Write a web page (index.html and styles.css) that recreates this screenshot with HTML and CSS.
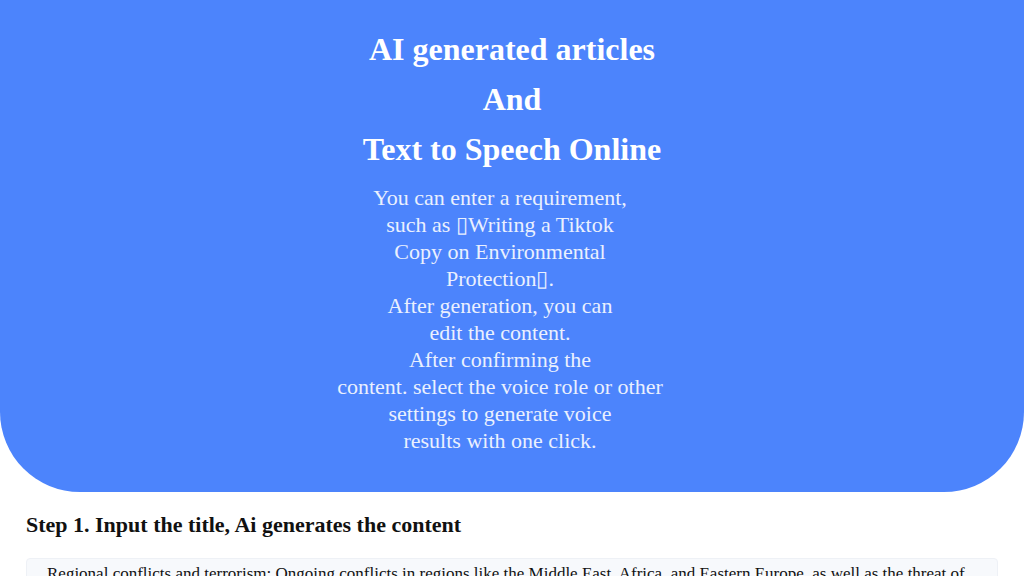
FILE: index.html
```html
<!DOCTYPE html>
<html lang="en">
<head>
<meta charset="utf-8">
<title>AI generated articles And Text to Speech Online</title>
<link rel="stylesheet" href="styles.css">
</head>
<body>
<header class="hero">
  <h1 class="hero-title">AI generated articles<br>And<br>Text to Speech Online</h1>
  <p class="hero-desc">You can enter a requirement,<br>such as ▯Writing a Tiktok<br>Copy on Environmental<br>Protection▯.<br>After generation, you can<br>edit the content.<br>After confirming the<br>content. select the voice role or other<br>settings to generate voice<br>results with one click.</p>
</header>
<main class="content">
  <h2 class="step-title">Step 1. Input the title, Ai generates the content</h2>
  <div class="text-box">
    <p>Regional conflicts and terrorism: Ongoing conflicts in regions like the Middle East, Africa, and Eastern Europe, as well as the threat of terrorism, continue to pose significant challenges to global peace and stability.</p>
  </div>
</main>
</body>
</html>
```
FILE: styles.css
```css
html, body {
  margin: 0;
  padding: 0;
  background: #ffffff;
  font-family: "Liberation Serif", "Times New Roman", serif;
}
.hero {
  background: #4c84fc;
  color: #ffffff;
  text-align: center;
  padding: 24px 20px 38px;
  border-radius: 0 0 80px 80px;
}
.hero-title {
  margin: 0;
  font-size: 32px;
  line-height: 50px;
  font-weight: bold;
}
.hero-desc {
  margin: 10px 0 0;
  padding-right: 24px;
  font-size: 22px;
  line-height: 27px;
  color: #eaf0fe;
  white-space: nowrap;
}
.content {
  padding: 0 26px;
}
.step-title {
  margin: 21px 0 21px;
  font-size: 22px;
  line-height: 24px;
  font-weight: bold;
  color: #111111;
}
.text-box {
  background: #f7f9fc;
  border: 1px solid #eef1f6;
  border-radius: 4px;
  padding: 3px 20px 12px;
}
.text-box p {
  margin: 0;
  font-size: 17px;
  line-height: 24px;
  color: #111111;
}
```
